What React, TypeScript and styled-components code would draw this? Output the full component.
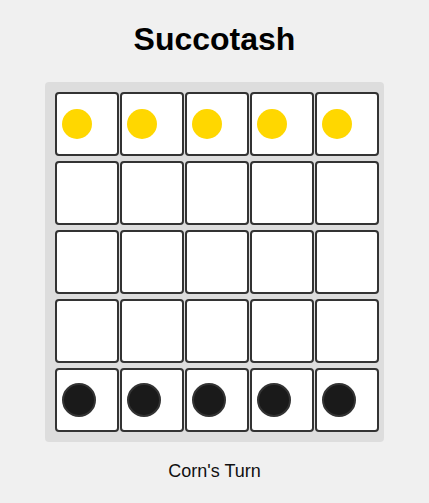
import styled, { createGlobalStyle } from 'styled-components';

const GlobalStyle = createGlobalStyle`
  body {
    margin: 0;
    background-color: #f0f0f0;
    font-family: "Liberation Sans", Arial, sans-serif;
  }
`;

const Page = styled.div`
  display: flex;
  flex-direction: column;
  align-items: center;
  padding-top: 21px;
`;

const Title = styled.h1`
  margin: 0;
  font-size: 32px;
  line-height: 37px;
  font-weight: bold;
  color: #000;
`;

const Board = styled.div`
  display: grid;
  grid-template-columns: repeat(5, 64px);
  grid-auto-rows: 64px;
  column-gap: 1px;
  row-gap: 5px;
  margin-top: 24px;
  padding: 10px 5px 10px 10px;
  background-color: #ddd;
  border-radius: 4px;
`;

const Cell = styled.div`
  box-sizing: border-box;
  display: flex;
  align-items: center;
  padding-left: 5px;
  background-color: #fff;
  border: 2px solid #333;
  border-radius: 4px;
`;

const Piece = styled.div<{ $side: 'corn' | 'bean' }>`
  box-sizing: border-box;
  border-radius: 50%;
  width: ${(p) => (p.$side === 'corn' ? '30px' : '34px')};
  height: ${(p) => (p.$side === 'corn' ? '30px' : '34px')};
  background-color: ${(p) => (p.$side === 'corn' ? '#ffd700' : '#1a1a1a')};
  border: ${(p) => (p.$side === 'corn' ? 'none' : '2px solid #333')};
`;

const Status = styled.p`
  margin: 19px 0 0;
  font-size: 18px;
  line-height: 21px;
  color: #111;
`;

const rows: Array<Array<'corn' | 'bean' | null>> = [
  ['corn', 'corn', 'corn', 'corn', 'corn'],
  [null, null, null, null, null],
  [null, null, null, null, null],
  [null, null, null, null, null],
  ['bean', 'bean', 'bean', 'bean', 'bean'],
];

export default function App() {
  return (
    <>
      <GlobalStyle />
      <Page>
        <Title>Succotash</Title>
        <Board>
          {rows.map((row, r) =>
            row.map((piece, c) => (
              <Cell key={`${r}-${c}`}>{piece && <Piece $side={piece} />}</Cell>
            ))
          )}
        </Board>
        <Status>Corn's Turn</Status>
      </Page>
    </>
  );
}
